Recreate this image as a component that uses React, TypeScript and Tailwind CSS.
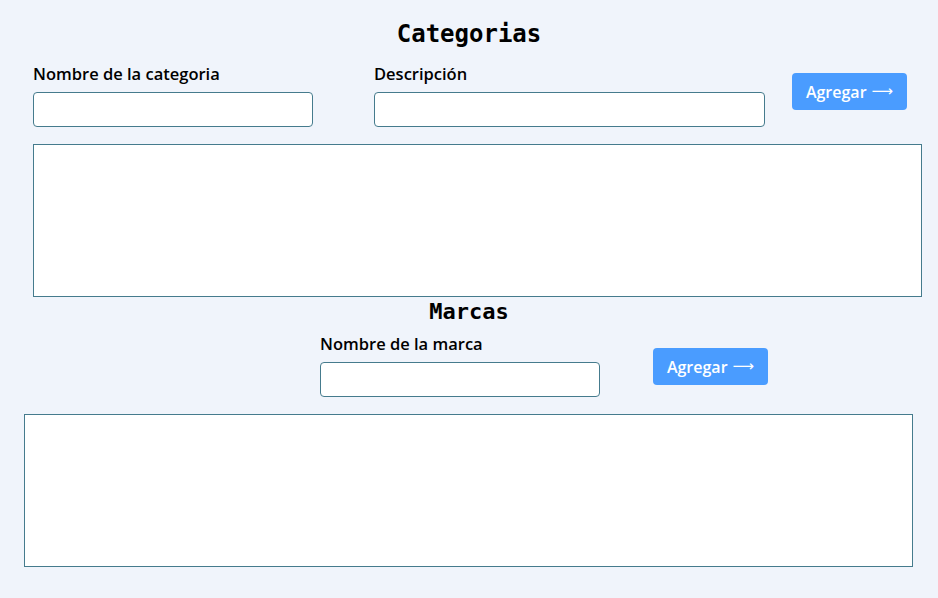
import React from "react";

const mono = { fontFamily: '"DejaVu Sans Mono", "Liberation Mono", monospace' };
const sans = { fontFamily: '"Open Sans", "Noto Sans", sans-serif' };

function Field({ label, width }: { label: string; width: string }) {
  return (
    <div className="flex flex-col">
      <label className="text-[16.5px] leading-[20px] font-semibold text-black" style={sans}>
        {label}
      </label>
      <input
        className={`mt-[8px] h-[35px] ${width} rounded-[4px] border border-[#457b8d] bg-white`}
      />
    </div>
  );
}

function Button() {
  return (
    <button
      className="h-[37px] w-[115px] rounded-[4px] bg-[#4a9cff] text-white text-[16px] font-semibold flex items-center justify-center gap-[5px]"
      style={sans}
    >
      <span>Agregar</span>
      <span style={{ fontFamily: '"DejaVu Sans", sans-serif' }} className="font-normal text-[15px]">⟶</span>
    </button>
  );
}

export default function App() {
  return (
    <div className="min-h-[598px] w-[938px] bg-[#f0f4fb] overflow-hidden">
      <h1 className="pt-[20px] text-center text-[24px] leading-[28px] font-bold text-black" style={mono}>
        Categorias
      </h1>
      <div className="mt-[16px] ml-[33px] flex">
        <Field label="Nombre de la categoria" width="w-[280px]" />
        <div className="ml-[61px]">
          <Field label="Descripción" width="w-[391px]" />
        </div>
        <div className="ml-[27px] pt-[9px]">
          <Button />
        </div>
      </div>
      <div className="mt-[17px] ml-[33px] h-[153px] w-[889px] border border-[#457b8d] bg-white" />
      <h2 className="mt-[1px] text-center text-[22px] leading-[28px] font-bold text-black" style={mono}>
        Marcas
      </h2>
      <div className="mt-[8px] ml-[320px] flex">
        <Field label="Nombre de la marca" width="w-[280px]" />
        <div className="ml-[53px] pt-[14px]">
          <Button />
        </div>
      </div>
      <div className="mt-[17px] ml-[24px] h-[153px] w-[889px] border border-[#457b8d] bg-white" />
    </div>
  );
}
